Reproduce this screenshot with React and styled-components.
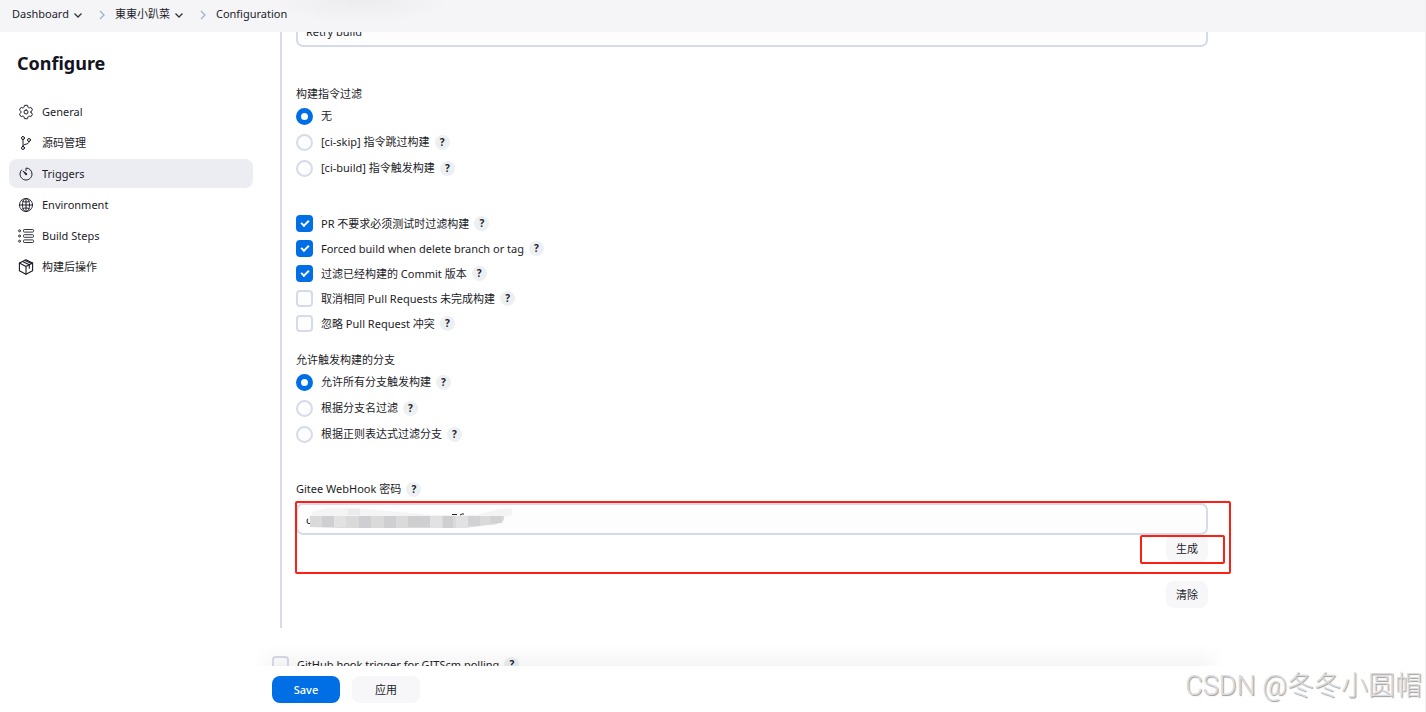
import React from "react"
import styled, { createGlobalStyle } from "styled-components"
import {
  IoSettingsOutline,
  IoGitBranchOutline,
  IoTimerOutline,
  IoGlobeOutline,
} from "react-icons/io5"

const Colors = {
  text: "#1c1c28",
  heading: "#14141f",
  blue: "#006fe6",
  border: "#d5dbea",
  header: "#f5f5f8",
  selected: "#ecedf3",
  button: "#f7f7f9",
  help: "#ecf0f3",
  red: "#fb1f14",
}

const GlobalStyle = createGlobalStyle`
  *, *::before, *::after {
    box-sizing: border-box;
  }

  body {
    margin: 0;
    color: ${Colors.text};
    background: #fff;
    font-family: "Noto Sans", "Noto Sans CJK SC", sans-serif;
    font-size: 11px;
    line-height: 18px;
  }

  button, input {
    font: inherit;
    color: inherit;
  }
`

const StepsIcon = () => (
  <svg viewBox="0 0 16 16" fill="none" stroke="currentColor">
    <circle cx="1.6" cy="2.8" r="1" />
    <circle cx="1.6" cy="8" r="1" />
    <circle cx="1.6" cy="13.2" r="1" />
    <rect x="5.5" y="1.5" width="10" height="2.6" rx="0.8" strokeWidth="0.9" />
    <rect x="5.5" y="6.7" width="10" height="2.6" rx="0.8" strokeWidth="0.9" />
    <rect x="5.5" y="11.9" width="10" height="2.6" rx="0.8" strokeWidth="0.9" />
  </svg>
)

const PackageIcon = () => (
  <svg
    viewBox="0 0 16 16"
    fill="none"
    stroke="currentColor"
    strokeWidth="1.1"
    strokeLinejoin="round"
    strokeLinecap="round"
  >
    <path d="M8 .8 14.6 4v7.8L8 15.3l-6.6-3.5V4Z" />
    <path d="M1.4 4 8 7.4 14.6 4M8 7.4v7.9" />
    <path d="m4.6 2.5 6.7 3.3v3.4M7 1.4l6.4 3.2" />
  </svg>
)

const Chevron = ({ direction }) => (
  <ChevronSvg viewBox="0 0 10 10" $direction={direction}>
    <path d={direction === "down" ? "M1.5 3.5 5 7l3.5-3.5" : "M3 1l4 4-4 4"} />
  </ChevronSvg>
)

const Redaction = () => (
  <RedactionSvg viewBox="0 0 210 22" aria-hidden="true">
    <path fill="#f4f4f5" d="M1 11 8 3l14-3h26l80 7h42l24-6 12-1v7l-16 4Z" />
    <path fill="#ebebed" d="M42 1h12v6H42Z" />
    <path fill="#dadadb" d="M4 8h194v4q-4 5-16 5l-24 3H36L4 19Z" />
    <path fill="#cfcfd1" d="M16 8h12v11H16ZM53 8h12v12H53ZM78 8h12v12H78ZM102 8h22v11h-22ZM137 8h10v12h-10Z" />
    <path fill="#e2e2e4" d="M28 8h12v11H28ZM124 8h12v12h-12ZM150 8h12v12h-12Z" />
    <path fill="#d2d2d4" d="M162 8h12v10h-12ZM184 8h12v7h-12Z" />
    <path stroke="#222" fill="none" d="M146 6.5h5M154 7l2-1h2" />
  </RedactionSvg>
)

const navItems = [
  { label: "General", icon: <IoSettingsOutline /> },
  { label: "源码管理", icon: <IoGitBranchOutline /> },
  { label: "Triggers", icon: <IoTimerOutline />, selected: true },
  { label: "Environment", icon: <IoGlobeOutline /> },
  { label: "Build Steps", icon: <StepsIcon /> },
  { label: "构建后操作", icon: <PackageIcon /> },
]

const commandFilters = [
  { label: "无", checked: true, noHelp: true },
  { label: "[ci-skip] 指令跳过构建" },
  { label: "[ci-build] 指令触发构建" },
]

const buildOptions = [
  { label: "PR 不要求必须测试时过滤构建", checked: true },
  { label: "Forced build when delete branch or tag", checked: true },
  { label: "过滤已经构建的 Commit 版本", checked: true },
  { label: "取消相同 Pull Requests 未完成构建" },
  { label: "忽略 Pull Request 冲突" },
]

const branchFilters = [
  { label: "允许所有分支触发构建", checked: true },
  { label: "根据分支名过滤" },
  { label: "根据正则表达式过滤分支" },
]

const Help = () => <HelpButton type="button">?</HelpButton>

const RadioGroup = ({ title, name, options }) => (
  <Fieldset>
    <Legend>{title}</Legend>
    {options.map(({ label, checked, noHelp }) => (
      <RadioRow key={label}>
        <OptionLabel>
          <Radio name={name} defaultChecked={checked} />
          {label}
        </OptionLabel>
        {!noHelp && <Help />}
      </RadioRow>
    ))}
  </Fieldset>
)

const CheckOption = ({ label, checked }) => (
  <CheckRow>
    <OptionLabel>
      <Checkbox defaultChecked={checked} />
      {label}
    </OptionLabel>
    <Help />
  </CheckRow>
)

const App = () => (
  <Page>
    <GlobalStyle />
    <Header>
      <Crumb href="#">Dashboard</Crumb>
      <Chevron direction="down" />
      <Chevron direction="right" />
      <Crumb href="#">東東小趴菜</Crumb>
      <Chevron direction="down" />
      <Chevron direction="right" />
      <Crumb href="#">Configuration</Crumb>
    </Header>
    <Body>
      <Sidebar>
        <Title>Configure</Title>
        <Nav>
          {navItems.map(({ label, icon, selected }) => (
            <NavLink href="#" key={label} $selected={selected}>
              {icon}
              {label}
            </NavLink>
          ))}
        </Nav>
      </Sidebar>
      <Main>
        <ScrollArea>
          <Nested>
            <RetryInput aria-label="Build action" defaultValue="Retry build" />
            <RadioGroup
              title="构建指令过滤"
              name="command"
              options={commandFilters}
            />
            <Checks>
              {buildOptions.map((option) => (
                <CheckOption key={option.label} {...option} />
              ))}
            </Checks>
            <RadioGroup
              title="允许触发构建的分支"
              name="branch"
              options={branchFilters}
            />
            <FieldHeading>
              <label htmlFor="webhook">Gitee WebHook 密码</label>
              <Help />
            </FieldHeading>
            <SecretField>
              <TextInput id="webhook" defaultValue="c" />
              <Redaction />
              <SmallButton type="button">生成</SmallButton>
              <OuterMark />
              <InnerMark />
            </SecretField>
            <SmallButton type="button">清除</SmallButton>
          </Nested>
          <CheckOption label="GitHub hook trigger for GITScm polling" />
        </ScrollArea>
        <BottomBar>
          <ActionButton type="submit" $primary>
            Save
          </ActionButton>
          <ActionButton type="button">应用</ActionButton>
        </BottomBar>
      </Main>
    </Body>
    <Watermark>CSDN @冬冬小圆帽</Watermark>
  </Page>
)

const Page = styled.div`
  position: relative;
  display: flex;
  flex-direction: column;
  height: 100vh;
  overflow: hidden;
  border-right: 1px solid #f0f0f3;
`

const Header = styled.header`
  display: flex;
  flex: none;
  align-items: center;
  height: 32px;
  padding: 0 12px 4px;
  background: radial-gradient(
      ellipse 90px 24px at 360px 0,
      #ececef,
      transparent
    )
    ${Colors.header};
`

const Crumb = styled.a`
  color: inherit;
  text-decoration: none;
`

const ChevronSvg = styled.svg`
  width: 10px;
  height: 10px;
  margin: ${({ $direction }) =>
    $direction === "down" ? "2px 0 0 4px" : "2px 8px 0 14px"};
  fill: none;
  stroke: ${({ $direction }) => ($direction === "down" ? "#333" : "#9fb2cc")};
  stroke-width: 1.3;
`

const Body = styled.div`
  display: flex;
  flex: 1;
  min-height: 0;
`

const Sidebar = styled.aside`
  flex: none;
  width: 262px;
  padding: 16px 9px;
`

const Title = styled.h1`
  margin: 0 8px 19px;
  color: ${Colors.heading};
  font-size: 18px;
  font-weight: 700;
  line-height: 30px;
`

const Nav = styled.nav`
  display: flex;
  flex-direction: column;
  gap: 2px;
`

const NavLink = styled.a`
  display: flex;
  align-items: center;
  gap: 8px;
  height: 29px;
  padding: 0 9px;
  border-radius: 8px;
  background: ${({ $selected }) => ($selected ? Colors.selected : "none")};
  color: inherit;
  text-decoration: none;

  svg {
    width: 16px;
    height: 16px;
  }
`

const Main = styled.main`
  display: flex;
  flex: 1;
  flex-direction: column;
  min-width: 0;
`

const ScrollArea = styled.div`
  flex: 1;
  min-height: 0;
  padding-left: 10px;
  overflow: hidden;
`

const Nested = styled.div`
  display: flex;
  flex-direction: column;
  align-items: flex-start;
  max-width: 928px;
  margin: 0 0 24px 8px;
  padding: 0 0 20px 14px;
  border-left: 2px solid ${Colors.border};
`

const TextInput = styled.input`
  width: 100%;
  height: 32px;
  padding: 0 8px;
  border: 2px solid ${Colors.border};
  border-radius: 7px;
  outline: none;
  background: #fdfdfe;
`

/* scrolled partly under the header */
const RetryInput = styled(TextInput)`
  margin: -17px 0 38px;
`

const Fieldset = styled.fieldset`
  margin: 0;
  padding: 0;
  border: 0;
`

const Legend = styled.legend`
  padding: 0;
`

const RadioRow = styled.div`
  display: flex;
  align-items: center;
  gap: 5px;
  height: 26px;
`

const CheckRow = styled(RadioRow)`
  height: 25px;
`

const OptionLabel = styled.label`
  display: flex;
  align-items: center;
  gap: 8px;
`

const Radio = styled.input.attrs({ type: "radio" })`
  appearance: none;
  width: 17px;
  height: 17px;
  margin: 0;
  border: 2px solid ${Colors.border};
  border-radius: 50%;
  background: #fdfdfe;

  &:checked {
    border: 5px solid ${Colors.blue};
  }
`

const Checkbox = styled.input.attrs({ type: "checkbox" })`
  display: grid;
  place-items: center;
  appearance: none;
  width: 17px;
  height: 17px;
  margin: 0;
  border: 2px solid ${Colors.border};
  border-radius: 4px;
  background: #fdfdfe;

  &:checked {
    border-color: ${Colors.blue};
    background: ${Colors.blue};
  }

  &:checked::before {
    content: "";
    width: 8px;
    height: 5px;
    margin-bottom: 3px;
    border: solid #fff;
    border-width: 0 0 2px 2px;
    transform: rotate(-45deg);
  }
`

const HelpButton = styled.button`
  width: 15px;
  height: 15px;
  padding: 0;
  border: 0;
  border-radius: 50%;
  background: ${Colors.help};
  font-size: 10px;
  font-weight: 700;
  line-height: 15px;
`

const Checks = styled.div`
  margin: 30px 0 15px;
`

const FieldHeading = styled.div`
  display: flex;
  align-items: center;
  gap: 5px;
  margin: 33px 0 5px;
`

const SecretField = styled.div`
  position: relative;
  display: flex;
  flex-direction: column;
  width: 100%;
  margin-bottom: 19px;
`

const RedactionSvg = styled.svg`
  position: absolute;
  top: 5px;
  left: 10px;
  width: 210px;
  height: 22px;
`

const SmallButton = styled.button`
  align-self: flex-end;
  width: 42px;
  height: 27px;
  padding: 0;
  border: 0;
  border-radius: 8px;
  background: ${Colors.button};
`

const Mark = styled.div`
  position: absolute;
  border: 2px solid ${Colors.red};
  border-radius: 2px;
  pointer-events: none;
`

const OuterMark = styled(Mark)`
  inset: -2px -23px -12px -1px;
`

const InnerMark = styled(Mark)`
  right: -17px;
  bottom: -2px;
  width: 85px;
  height: 29px;
`

const BottomBar = styled.div`
  position: relative;
  display: flex;
  flex: none;
  gap: 12px;
  max-width: 946px;
  height: 46px;
  padding: 10px;

  &::before {
    content: "";
    position: absolute;
    right: -16px;
    bottom: 100%;
    left: -8px;
    height: 22px;
    background: linear-gradient(transparent, rgba(0, 0, 0, 0.04));
    mask-image: linear-gradient(
      to right,
      transparent,
      #000 24px,
      #000 calc(100% - 24px),
      transparent
    );
    pointer-events: none;
  }
`

const ActionButton = styled.button`
  width: 68px;
  height: 27px;
  padding: 0;
  border: 0;
  border-radius: 8px;
  background: ${({ $primary }) => ($primary ? Colors.blue : Colors.button)};
  color: ${({ $primary }) => ($primary ? "#fff" : "inherit")};
  font-weight: ${({ $primary }) => ($primary ? 500 : 400)};
`

const Watermark = styled.div`
  position: absolute;
  right: 3px;
  bottom: 8px;
  color: #dcdcde;
  font-family: Roboto, "Noto Sans CJK SC", sans-serif;
  font-size: 27px;
  font-weight: 300;
  line-height: 36px;
  text-shadow: 1px 1px 1px #999;
`

export default App
